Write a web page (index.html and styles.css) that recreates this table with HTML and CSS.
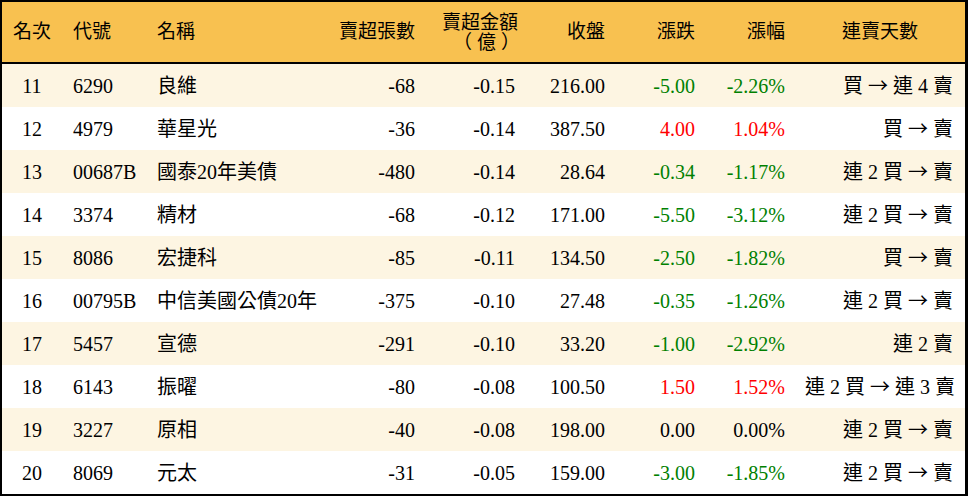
FILE: index.html
```html
<!DOCTYPE html>
<html lang="zh-Hant">
<head>
<meta charset="utf-8">
<title>賣超排行</title>
<link rel="stylesheet" href="styles.css">
</head>
<body>
<table class="rank">
  <colgroup>
    <col class="c-rank"><col class="c-code"><col class="c-name"><col class="c-vol"><col class="c-amt"><col class="c-close"><col class="c-chg"><col class="c-pct"><col class="c-days">
  </colgroup>
  <thead>
    <tr>
      <th class="ctr">名次</th>
      <th class="lft">代號</th>
      <th class="lft">名稱</th>
      <th class="rgt">賣超張數</th>
      <th class="rgt"><span class="two"><span class="line">賣超金額</span><span class="line paren">（億）</span></span></th>
      <th class="rgt">收盤</th>
      <th class="rgt">漲跌</th>
      <th class="rgt">漲幅</th>
      <th class="ctr">連賣天數</th>
    </tr>
  </thead>
  <tbody>
    <tr><td class="ctr">11</td><td class="lft">6290</td><td class="lft">良維</td><td class="rgt">-68</td><td class="rgt">-0.15</td><td class="rgt">216.00</td><td class="rgt dn">-5.00</td><td class="rgt dn">-2.26%</td><td class="rgt days">買 <span class="arr">→</span> 連 4 賣</td></tr>
    <tr><td class="ctr">12</td><td class="lft">4979</td><td class="lft">華星光</td><td class="rgt">-36</td><td class="rgt">-0.14</td><td class="rgt">387.50</td><td class="rgt up">4.00</td><td class="rgt up">1.04%</td><td class="rgt days">買 <span class="arr">→</span> 賣</td></tr>
    <tr><td class="ctr">13</td><td class="lft">00687B</td><td class="lft">國泰20年美債</td><td class="rgt">-480</td><td class="rgt">-0.14</td><td class="rgt">28.64</td><td class="rgt dn">-0.34</td><td class="rgt dn">-1.17%</td><td class="rgt days">連 2 買 <span class="arr">→</span> 賣</td></tr>
    <tr><td class="ctr">14</td><td class="lft">3374</td><td class="lft">精材</td><td class="rgt">-68</td><td class="rgt">-0.12</td><td class="rgt">171.00</td><td class="rgt dn">-5.50</td><td class="rgt dn">-3.12%</td><td class="rgt days">連 2 買 <span class="arr">→</span> 賣</td></tr>
    <tr><td class="ctr">15</td><td class="lft">8086</td><td class="lft">宏捷科</td><td class="rgt">-85</td><td class="rgt">-0.11</td><td class="rgt">134.50</td><td class="rgt dn">-2.50</td><td class="rgt dn">-1.82%</td><td class="rgt days">買 <span class="arr">→</span> 賣</td></tr>
    <tr><td class="ctr">16</td><td class="lft">00795B</td><td class="lft">中信美國公債20年</td><td class="rgt">-375</td><td class="rgt">-0.10</td><td class="rgt">27.48</td><td class="rgt dn">-0.35</td><td class="rgt dn">-1.26%</td><td class="rgt days">連 2 買 <span class="arr">→</span> 賣</td></tr>
    <tr><td class="ctr">17</td><td class="lft">5457</td><td class="lft">宣德</td><td class="rgt">-291</td><td class="rgt">-0.10</td><td class="rgt">33.20</td><td class="rgt dn">-1.00</td><td class="rgt dn">-2.92%</td><td class="rgt days">連 2 賣</td></tr>
    <tr><td class="ctr">18</td><td class="lft">6143</td><td class="lft">振曜</td><td class="rgt">-80</td><td class="rgt">-0.08</td><td class="rgt">100.50</td><td class="rgt up">1.50</td><td class="rgt up">1.52%</td><td class="rgt days">連 2 買 <span class="arr">→</span> 連 3 賣</td></tr>
    <tr><td class="ctr">19</td><td class="lft">3227</td><td class="lft">原相</td><td class="rgt">-40</td><td class="rgt">-0.08</td><td class="rgt">198.00</td><td class="rgt">0.00</td><td class="rgt">0.00%</td><td class="rgt days">連 2 買 <span class="arr">→</span> 賣</td></tr>
    <tr><td class="ctr">20</td><td class="lft">8069</td><td class="lft">元太</td><td class="rgt">-31</td><td class="rgt">-0.05</td><td class="rgt">159.00</td><td class="rgt dn">-3.00</td><td class="rgt dn">-1.85%</td><td class="rgt days">連 2 買 <span class="arr">→</span> 賣</td></tr>
  </tbody>
</table>
</body>
</html>
```
FILE: styles.css
```css
html, body {
  margin: 0;
  padding: 0;
  background: #ffffff;
}

.rank {
  width: 968px;
  table-layout: fixed;
  border-collapse: separate;
  border-spacing: 0;
  border-style: solid;
  border-color: #000;
  border-width: 2px 3px 2px 2px;
  font-family: "Liberation Serif", "Noto Sans CJK TC", serif;
  font-size: 20px;
  color: #000;
}

.c-rank { width: 60px; }
.c-code { width: 85px; }
.c-name { width: 178px; }
.c-vol { width: 100px; }
.c-amt { width: 100px; }
.c-close { width: 90px; }
.c-chg { width: 90px; }
.c-pct { width: 90px; }
.c-days { width: 170px; }

.rank th {
  height: 60px;
  padding: 0 10px;
  background: #f8c150;
  border-bottom: 2px solid #000;
  font-weight: normal;
  font-size: 19px;
  line-height: 20px;
  white-space: nowrap;
}

.rank td {
  height: 43px;
  padding: 0 10px;
  line-height: 20px;
  white-space: nowrap;
}

.rank tbody tr:nth-child(odd) td {
  background: #fdf5e2;
}

.ctr { text-align: center; }
.lft { text-align: left; }
.rgt { text-align: right; }

.rank th.ctr:first-child,
.rank td.ctr { padding: 0; }

.rank th:nth-child(2),
.rank td:nth-child(2) { padding-left: 11px; }

.rank td.days { padding-right: 12px; }
.rank th:last-child { padding: 0; }

.two {
  display: inline-flex;
  flex-direction: column;
  align-items: center;
  gap: 1px;
  margin-top: -1px;
}

.line {
  display: block;
  line-height: 19px;
}

.paren {
  letter-spacing: 5px;
  padding-left: 18px;
}

.arr {
  font-family: "Noto Sans CJK TC", sans-serif;
}

.up { color: #ff0000; }
.dn { color: #008000; }
```
